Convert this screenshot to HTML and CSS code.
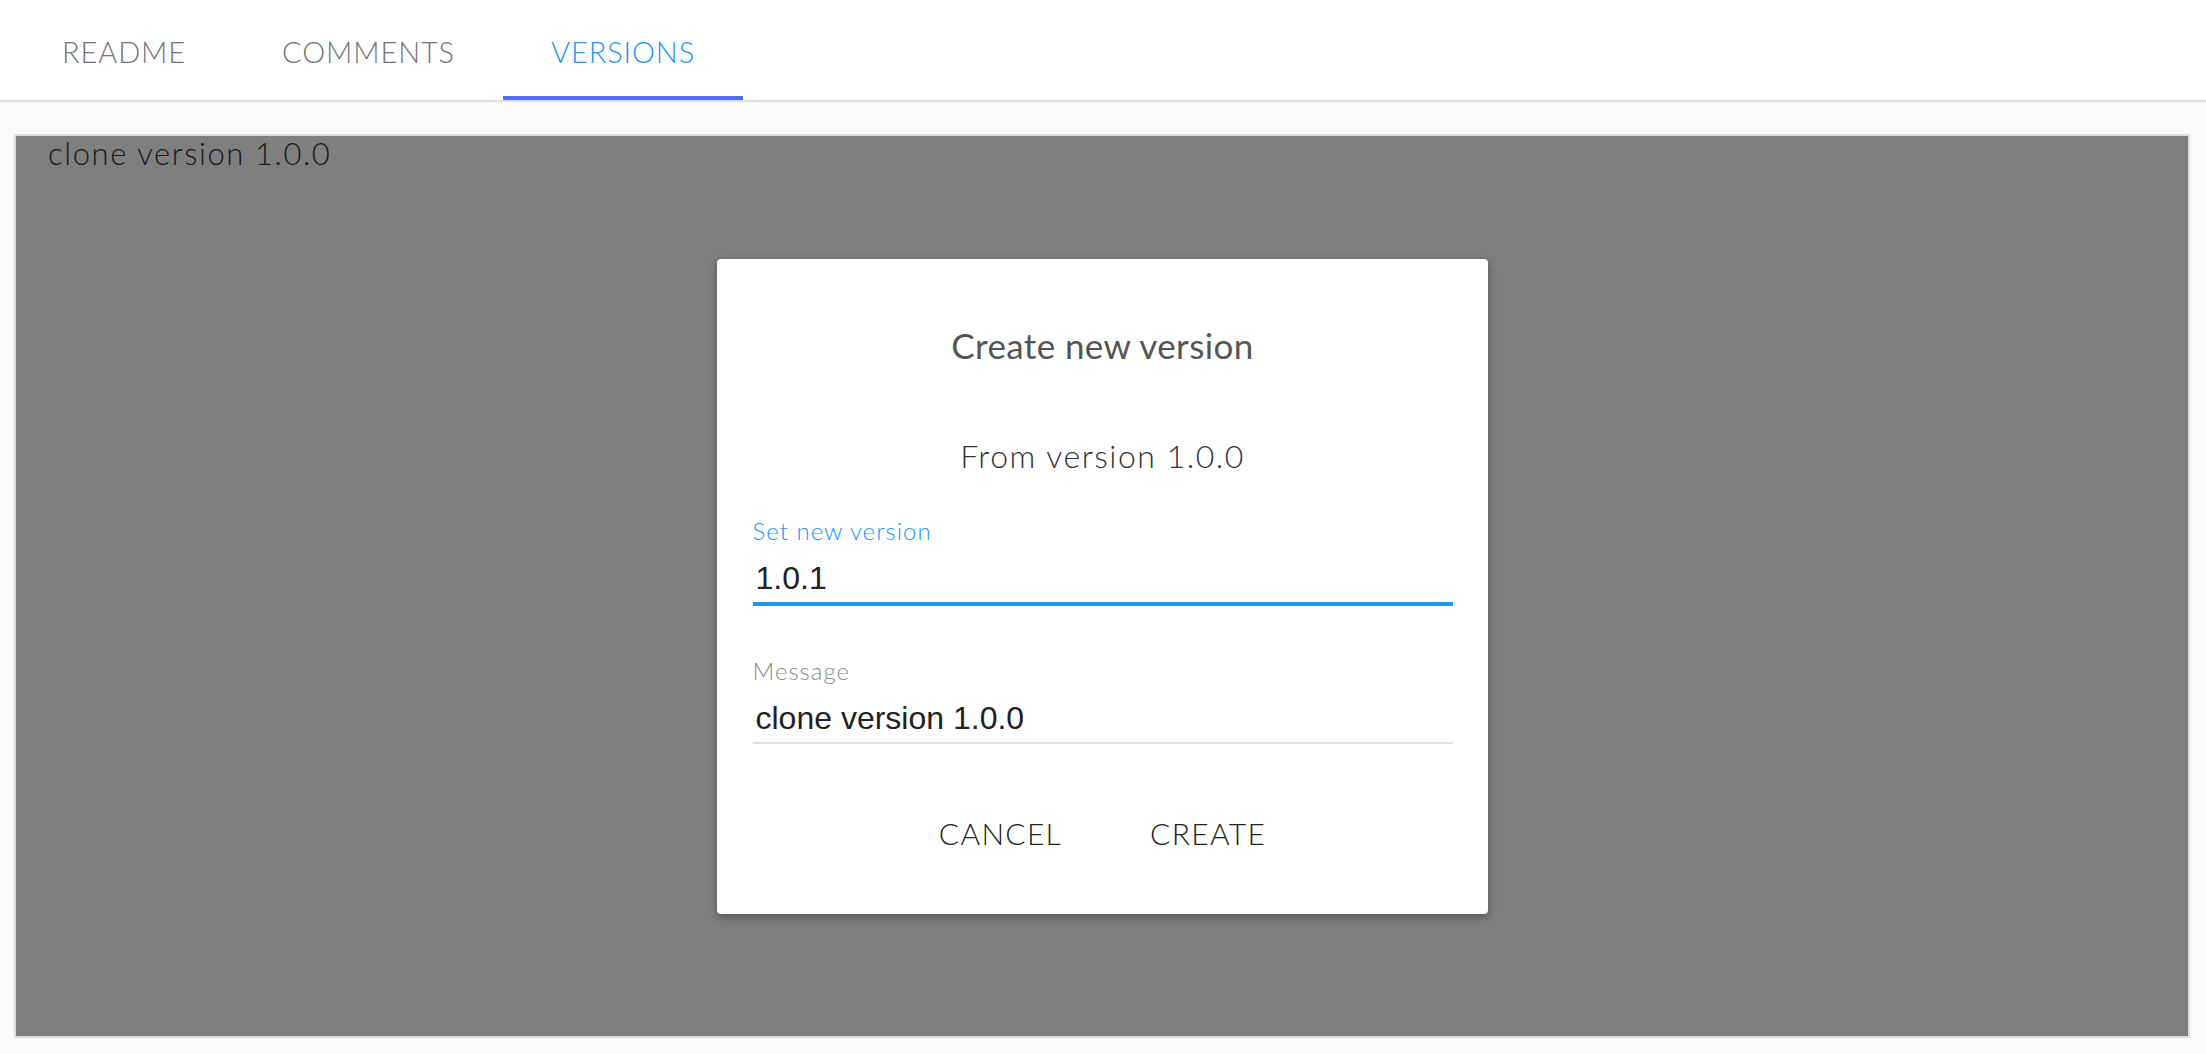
FILE: index.html
```html
<!DOCTYPE html>
<html lang="en">
<head>
<meta charset="utf-8">
<title>Versions</title>
<link rel="stylesheet" href="styles.css">
</head>
<body>
<header class="tabbar">
  <nav class="tabs">
    <div class="tab">README</div>
    <div class="tab">COMMENTS</div>
    <div class="tab tab-active">VERSIONS</div>
  </nav>
</header>
<main class="content">
  <section class="panel">
    <div class="panel-text">clone version 1.0.0</div>
    <div class="overlay">
      <div class="dialog">
        <h2 class="dialog-title">Create new version</h2>
        <p class="dialog-sub">From version 1.0.0</p>
        <div class="field field-focused">
          <label class="field-label">Set new version</label>
          <div class="field-value">1.0.1</div>
        </div>
        <div class="field">
          <label class="field-label">Message</label>
          <div class="field-value">clone version 1.0.0</div>
        </div>
        <div class="actions">
          <button class="btn">CANCEL</button>
          <button class="btn">CREATE</button>
        </div>
      </div>
    </div>
  </section>
</main>
</body>
</html>
```
FILE: styles.css
```css
* { box-sizing: border-box; }
html, body { margin: 0; height: 100%; }
body {
  background: #fafafa;
  font-family: "Lato", "Open Sans", sans-serif;
  display: flex;
  flex-direction: column;
}
.tabbar {
  height: 102px;
  background: #fff;
  border-bottom: 2px solid #e0e0e0;
  flex: none;
}
.tabs {
  display: flex;
  height: 100px;
  padding-left: 14px;
}
.tab {
  display: flex;
  align-items: center;
  padding: 6px 48px 0;
  font-size: 29px;
  font-weight: 300;
  letter-spacing: 0.9px;
  color: #757575;
  border-bottom: 4px solid transparent;
}
.tab-active {
  color: #2196f3;
  border-bottom-color: #536dfe;
}
.content {
  flex: 1;
  display: flex;
  padding: 32px 16px 16px 14px;
}
.panel {
  flex: 1;
  position: relative;
  border: 2px solid #dcdcdc;
  background: #fff;
  padding: 0 32px;
}
.panel-text {
  font-size: 31px;
  font-weight: 300;
  letter-spacing: 1.6px;
  line-height: 34px;
  color: #333;
}
.overlay {
  position: absolute;
  inset: 0;
  background: rgba(0, 0, 0, 0.5);
  display: flex;
  align-items: center;
  justify-content: center;
}
.dialog {
  width: 771px;
  background: #fff;
  border-radius: 4px;
  box-shadow: 0 3px 8px rgba(0, 0, 0, 0.35);
  padding: 66px 35px 55px 36px;
  display: flex;
  flex-direction: column;
}
.dialog-title {
  margin: 0;
  text-align: center;
  font-size: 35px;
  font-weight: 400;
  letter-spacing: 0.4px;
  line-height: 40px;
  color: #555;
}
.dialog-sub {
  margin: 71px 0 0;
  text-align: center;
  font-size: 32px;
  font-weight: 300;
  letter-spacing: 1.5px;
  line-height: 40px;
  color: #333;
}
.field {
  margin-top: 41px;
  display: flex;
  flex-direction: column;
  border-bottom: 2px solid #e0e0e0;
}
.field + .field { margin-top: 51px; }
.field-focused { border-bottom: 4px solid #2196f3; }
.field-label {
  font-size: 24px;
  font-weight: 300;
  letter-spacing: 1px;
  line-height: 28px;
  color: #8a8a8a;
}
.field-focused .field-label { color: #2196f3; }
.field-value {
  font-family: "Liberation Sans", Arial, sans-serif;
  font-size: 32px;
  line-height: 44px;
  color: #222;
  padding: 11px 3px 2px;
}
.actions {
  display: flex;
  justify-content: center;
  gap: 56px;
  margin-top: 63px;
}
.btn {
  background: none;
  border: 0;
  padding: 8px 16px;
  font-family: "Lato", "Open Sans", sans-serif;
  font-size: 30px;
  font-weight: 300;
  letter-spacing: 1.3px;
  color: #222;
  line-height: 36px;
}
```
